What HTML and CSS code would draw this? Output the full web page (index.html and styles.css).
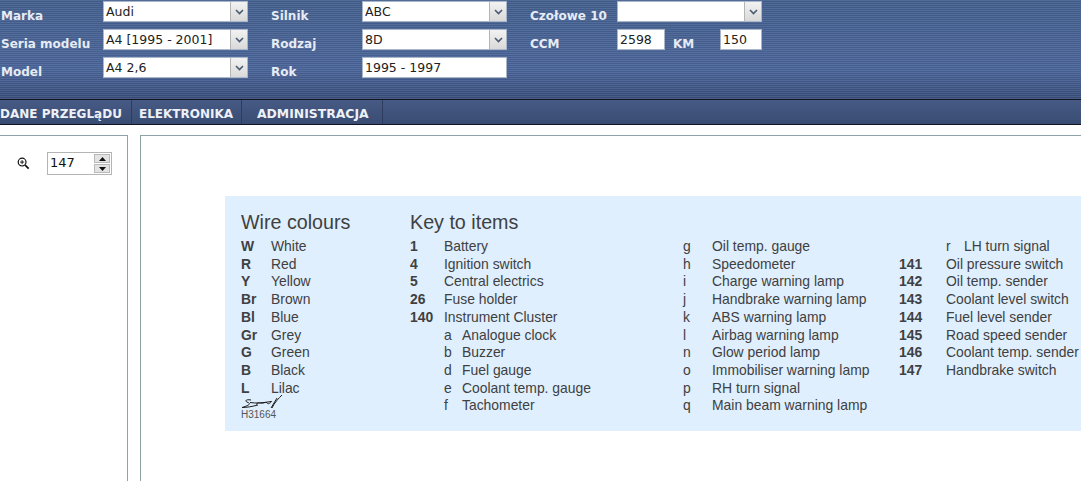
FILE: index.html
```html
<!DOCTYPE html>
<html lang="pl">
<head>
    <meta charset="UTF-8">
    <meta name="viewport" content="width=device-width, initial-scale=1.0">
    <title>Dane przeglądu</title>
    <link rel="stylesheet" href="styles.css">
</head>
<body>
    <header class="filters">
        <span class="label">Marka</span>
        <div class="select"><span>Audi</span><i class="arrow"><svg width="9" height="6" viewBox="0 0 9 6"><path d="M1 1l3.5 3.5L8 1" fill="none" stroke="#4a5a70" stroke-width="1.6"/></svg></i></div>
        <span class="label">Silnik</span>
        <div class="select"><span>ABC</span><i class="arrow"><svg width="9" height="6" viewBox="0 0 9 6"><path d="M1 1l3.5 3.5L8 1" fill="none" stroke="#4a5a70" stroke-width="1.6"/></svg></i></div>
        <span class="label">Czołowe 10</span>
        <div class="select"><span></span><i class="arrow"><svg width="9" height="6" viewBox="0 0 9 6"><path d="M1 1l3.5 3.5L8 1" fill="none" stroke="#4a5a70" stroke-width="1.6"/></svg></i></div>

        <span class="label">Seria modelu</span>
        <div class="select"><span>A4 [1995 - 2001]</span><i class="arrow"><svg width="9" height="6" viewBox="0 0 9 6"><path d="M1 1l3.5 3.5L8 1" fill="none" stroke="#4a5a70" stroke-width="1.6"/></svg></i></div>
        <span class="label">Rodzaj</span>
        <div class="select"><span>8D</span><i class="arrow"><svg width="9" height="6" viewBox="0 0 9 6"><path d="M1 1l3.5 3.5L8 1" fill="none" stroke="#4a5a70" stroke-width="1.6"/></svg></i></div>
        <span class="label">CCM</span>
        <div class="pair">
            <div class="select ccm"><span>2598</span></div>
            <span class="label km">KM</span>
            <div class="select power"><span>150</span></div>
        </div>

        <span class="label">Model</span>
        <div class="select"><span>A4 2,6</span><i class="arrow"><svg width="9" height="6" viewBox="0 0 9 6"><path d="M1 1l3.5 3.5L8 1" fill="none" stroke="#4a5a70" stroke-width="1.6"/></svg></i></div>
        <span class="label">Rok</span>
        <div class="select"><span>1995 - 1997</span></div>
    </header>

    <nav class="tabs">
        <a href="#dane" class="tab-dane">DANE PRZEGLąDU</a>
        <a href="#elektronika" class="tab-elektronika">ELEKTRONIKA</a>
        <a href="#administracja" class="tab-admin">ADMINISTRACJA</a>
    </nav>

    <div class="content">
        <aside class="side">
            <svg class="zoom-icon" width="13" height="13" viewBox="0 0 14 14">
                <circle cx="5.5" cy="5.5" r="4.2" fill="none" stroke="#111" stroke-width="1.3"/>
                <path d="M3.3 5.5h4.4M5.5 3.3v4.4" stroke="#111" stroke-width="1"/>
                <path d="M8.8 8.8l3.8 3.8" stroke="#111" stroke-width="1.8"/>
            </svg>
            <div class="spinner">
                <span>147</span>
                <div class="spin-buttons">
                    <i><svg width="7" height="4" viewBox="0 0 7 4"><path d="M3.5 0L7 4H0z" fill="#111"/></svg></i>
                    <i><svg width="7" height="4" viewBox="0 0 7 4"><path d="M0 0h7L3.5 4z" fill="#111"/></svg></i>
                </div>
            </div>
        </aside>

        <main class="viewer">
            <section class="legend">
                <div class="wires">
                    <h2>Wire colours</h2>
                    <dl class="wire-list">
                        <dt>W</dt><dd>White</dd>
                        <dt>R</dt><dd>Red</dd>
                        <dt>Y</dt><dd>Yellow</dd>
                        <dt>Br</dt><dd>Brown</dd>
                        <dt>Bl</dt><dd>Blue</dd>
                        <dt>Gr</dt><dd>Grey</dd>
                        <dt>G</dt><dd>Green</dd>
                        <dt>B</dt><dd>Black</dd>
                        <dt>L</dt><dd>Lilac</dd>
                    </dl>
                    <svg class="signature" width="42" height="15" viewBox="0 0 42 15">
                        <path d="M10 5C5 4 3 6 7 7.500S6 11 1 12.500c5 0 10-1 16-2.500M9 7.500c6 1 13 .5 21-1M15 9.500c3-3 4-1 7-1.500s3-1.500 4 0 3 .5 5-2M36 3l-6 10M41 0C38 3 33 8 31 13" fill="none" stroke="#1c1c1c" stroke-width="1"/>
                    </svg>
                    <div class="ref-code">H31664</div>
                </div>

                <div class="key-col">
                    <h2>Key to items</h2>
                    <dl class="item-list">
                        <dt>1</dt><dd>Battery</dd>
                        <dt>4</dt><dd>Ignition switch</dd>
                        <dt>5</dt><dd>Central electrics</dd>
                        <dt>26</dt><dd>Fuse holder</dd>
                        <dt>140</dt><dd>Instrument Cluster</dd>
                        <dt></dt><dd class="sub"><span>a</span>Analogue clock</dd>
                        <dt></dt><dd class="sub"><span>b</span>Buzzer</dd>
                        <dt></dt><dd class="sub"><span>d</span>Fuel gauge</dd>
                        <dt></dt><dd class="sub"><span>e</span>Coolant temp. gauge</dd>
                        <dt></dt><dd class="sub"><span>f</span>Tachometer</dd>
                    </dl>
                </div>

                <div class="key-col letters">
                    <dl class="letter-list">
                        <dt>g</dt><dd>Oil temp. gauge</dd>
                        <dt>h</dt><dd>Speedometer</dd>
                        <dt>i</dt><dd>Charge warning lamp</dd>
                        <dt>j</dt><dd>Handbrake warning lamp</dd>
                        <dt>k</dt><dd>ABS warning lamp</dd>
                        <dt>l</dt><dd>Airbag warning lamp</dd>
                        <dt>n</dt><dd>Glow period lamp</dd>
                        <dt>o</dt><dd>Immobiliser warning lamp</dd>
                        <dt>p</dt><dd>RH turn signal</dd>
                        <dt>q</dt><dd>Main beam warning lamp</dd>
                    </dl>
                </div>

                <div class="key-col last">
                    <dl class="last-list">
                        <dt></dt><dd class="sub"><span>r</span>LH turn signal</dd>
                        <dt>141</dt><dd>Oil pressure switch</dd>
                        <dt>142</dt><dd>Oil temp. sender</dd>
                        <dt>143</dt><dd>Coolant level switch</dd>
                        <dt>144</dt><dd>Fuel level sender</dd>
                        <dt>145</dt><dd>Road speed sender</dd>
                        <dt>146</dt><dd>Coolant temp. sender</dd>
                        <dt>147</dt><dd>Handbrake switch</dd>
                    </dl>
                </div>
            </section>
        </main>
    </div>
</body>
</html>
```
FILE: styles.css
```css
html, body {
    margin: 0;
    padding: 0;
    height: 100%;
}
body {
    width: 1081px;
    height: 481px;
    overflow: hidden;
    background-color: #ffffff;
    font-family: "DejaVu Sans", Verdana, sans-serif;
    color: #111111;
    display: flex;
    flex-direction: column;
}

/* Top filter form */
.filters {
    box-sizing: border-box;
    height: 99px;
    padding: 1px 0 0 1px;
    display: grid;
    grid-template-columns: 102px 145px 114px 145px 110px 145px;
    grid-auto-rows: 21px;
    row-gap: 7px;
    align-content: start;
    background-color: #46618f;
    background-image:
        repeating-linear-gradient(to bottom, rgba(255, 255, 255, 0.07) 0, rgba(255, 255, 255, 0.07) 1px, rgba(0, 0, 0, 0.06) 1px, rgba(0, 0, 0, 0.06) 2px),
        linear-gradient(to bottom, #44608f 0, #4a659a 70%, #3a4f7c 100%);
}
.label {
    color: #e6ebf4;
    font-size: 12px;
    font-weight: bold;
    line-height: 31px;
    white-space: nowrap;
}
.filters > .label:nth-of-type(3n + 2),
.filters > .label:nth-of-type(3n + 3) {
    padding-left: 23px;
}
.select {
    box-sizing: border-box;
    height: 21px;
    border: 1px solid #a9b5c9;
    background-color: #ffffff;
    display: flex;
    justify-content: space-between;
    font-size: 12.5px;
    line-height: 19px;
    padding-left: 2px;
    color: #222222;
    width: 145px;
}
.arrow {
    width: 16px;
    height: 19px;
    border-left: 1px solid #b5b5b5;
    background: linear-gradient(to bottom, #f2f2f2, #d9d9d9);
    display: flex;
    align-items: center;
    justify-content: center;
}
.pair {
    display: flex;
    width: 145px;
}
.select.ccm {
    width: 48px;
}
.select.power {
    width: 42px;
    margin-left: auto;
}
.label.km {
    margin-left: 8px;
}

/* Tabs */
.tabs {
    box-sizing: border-box;
    height: 26px;
    border-top: 1px solid #10151f;
    border-bottom: 1px solid #10151f;
    background: linear-gradient(to bottom, #465a85, #3a4c72);
    display: flex;
}
.tabs a {
    box-sizing: border-box;
    color: #eef1f6;
    font-size: 12px;
    font-weight: bold;
    text-decoration: none;
    line-height: 28px;
    white-space: nowrap;
    border-right: 1px solid #2e3d5e;
}
.tab-dane {
    width: 132px;
    padding-left: 0;
}
.tab-elektronika {
    width: 110px;
    padding-left: 7px;
}
.tab-admin {
    width: 141px;
    padding-left: 15px;
    font-size: 12.4px !important;
}

/* Body */
.content {
    flex: 1;
    display: flex;
    padding-top: 10px;
    gap: 12px;
    min-height: 0;
}
.side {
    box-sizing: border-box;
    width: 128px;
    border-top: 1px solid #8ea3a8;
    border-right: 1px solid #8ea3a8;
    padding: 16px 0 0 17px;
    display: flex;
    gap: 17px;
    align-items: flex-start;
}
.zoom-icon {
    margin-top: 5px;
}
.spinner {
    box-sizing: border-box;
    width: 65px;
    height: 23px;
    border: 1px solid #b4b4b4;
    display: flex;
    justify-content: space-between;
    font-size: 13px;
    line-height: 17px;
    padding: 1px 1px 1px 2px;
}
.spin-buttons {
    display: flex;
    flex-direction: column;
    gap: 1px;
}
.spin-buttons i {
    width: 16px;
    height: 9px;
    background: #e3e3e3;
    border: 1px solid #b9b9b9;
    box-sizing: border-box;
    display: flex;
    align-items: center;
    justify-content: center;
}
.viewer {
    flex: 1;
    border-top: 1px solid #8ea3a8;
    border-left: 1px solid #8ea3a8;
    padding: 60px 0 0 84px;
    min-width: 0;
}

/* Wiring legend */
.legend {
    height: 235px;
    box-sizing: border-box;
    padding: 14px 0 0 16px;
    background-color: #dfeffd;
    font-family: "Liberation Sans", Arial, sans-serif;
    font-size: 13.9px;
    line-height: 17.7px;
    color: #404042;
    display: flex;
    white-space: nowrap;
}
.legend h2 {
    margin: 0 0 4px;
    font-size: 19.7px;
    line-height: 24px;
    font-weight: normal;
}
.legend dl {
    margin: 0;
    display: grid;
}
.legend dd {
    margin: 0;
}
.legend dt {
    font-weight: bold;
    min-height: 17.7px;
}
.wires {
    width: 169px;
}
.wire-list {
    grid-template-columns: 30px 1fr;
}
.signature {
    display: block;
    margin-top: -2px;
}
.ref-code {
    font-size: 10px;
    line-height: 9px;
    color: #555558;
}
.key-col {
    width: 273px;
}
.item-list {
    grid-template-columns: 34px 1fr;
}
.sub span {
    display: inline-block;
    width: 18px;
}
.letters {
    width: 216px;
    padding-top: 28px;
}
.letter-list {
    grid-template-columns: 29px 1fr;
}
.letter-list dt {
    font-weight: normal;
}
.last {
    width: auto;
    padding-top: 28px;
}
.last-list {
    grid-template-columns: 47px 1fr;
}
```
